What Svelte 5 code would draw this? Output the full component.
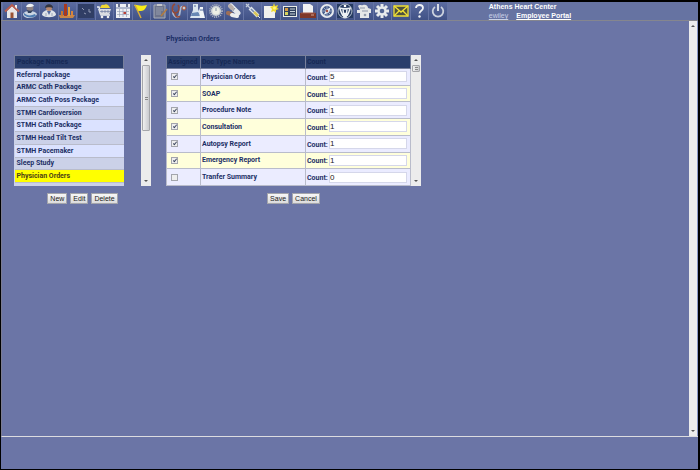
<script>
  let packages = [
    "Referral package",
    "ARMC Cath Package",
    "ARMC Cath Poss Package",
    "STMH Cardioversion",
    "STMH Cath Package",
    "STMH Head Tilt Test",
    "STMH Pacemaker",
    "Sleep Study",
    "Physician Orders",
  ];

  let docTypes = [
    { name: "Physician Orders", assigned: true, count: "5" },
    { name: "SOAP", assigned: true, count: "1" },
    { name: "Procedure Note", assigned: true, count: "1" },
    { name: "Consultation", assigned: true, count: "1" },
    { name: "Autopsy Report", assigned: true, count: "1" },
    { name: "Emergency Report", assigned: true, count: "1" },
    { name: "Tranfer Summary", assigned: false, count: "0" },
  ];

  let tools = [
    "home", "patient", "staff", "chart", "monitor", "cart", "calendar", "flag",
    "notes", "stethoscope", "lab", "seal", "pills", "syringe", "newdoc", "card",
    "printer", "compass", "medical", "scroll", "gear", "mail", "help", "power",
  ];

  let selected = "Physician Orders";
</script>

<div class="app">
  <header>
    <nav>
      {#each tools as tool}
        <button class="tool" aria-label={tool}>
          <svg viewBox="0 0 16 16">
            {#if tool === "home"}
              <path d="M3 8v7h10V8L8 3z" fill="#e8e6e6" />
              <path d="M1 8.5 8 2l7 6.5" fill="none" stroke="#b95c4c" stroke-width="2" />
              <path d="M11 2h2v4l-2-2z" fill="#f4efec" />
              <path d="M6.5 9.5h3V15h-3z" fill="#9c5434" />
            {:else if tool === "patient"}
              <path d="M1 11c1-2 3-3 6-3 4 0 7 1 8 3-1 3-5 4-8 4-4 0-6-2-6-4z" fill="#cbd5e2" />
              <path d="M2 10c3 3 7 3 11 1l1 2c-4 2-9 2-12-1z" fill="#4f7db2" />
              <circle cx="8" cy="5" r="3.4" fill="#8d8285" />
              <path d="M4 4c1-4 7-4 8-1L9 4z" fill="#edf0f3" />
              <path d="M5 7c2 1 4 1 6 0l-2 3H6z" fill="#344460" />
            {:else if tool === "staff"}
              <path d="M1 12c0-3 3-5 7-5s7 2 7 5c-3 3-11 3-14 0z" fill="#dfe3e8" />
              <circle cx="8" cy="5" r="3" fill="#b98a70" />
              <path d="M4 5c0-5 8-5 8 0-2-1-6-1-8 0z" fill="#33343f" />
              <path d="M6 8h4l-2 4z" fill="#566ca0" />
              <path d="M5 10v3m6-3v3" stroke="#9fa8b9" />
            {:else if tool === "chart"}
              <path d="M0 12h16l-2 3H1z" fill="#c58649" />
              <path d="M2 8h2v5H2z" fill="#c97831" />
              <path d="M5 1h3v12H5z" fill="#a9391e" />
              <path d="M9 4h2v9H9z" fill="#e6a33b" />
              <path d="M12 8h2v5h-2z" fill="#d9853c" />
            {:else if tool === "monitor"}
              <path d="M0 1h16v14H0z" fill="#303e65" />
              <path d="M4 5l2 2m0 3 2 1m3-5v3h2" fill="none" stroke="#929bb6" />
            {:else if tool === "cart"}
              <path d="M1 4h2l2 8h9" fill="none" stroke="#eceff3" stroke-width="1.4" />
              <path d="M2 6h13l-2 6H4z" fill="#dadde2" />
              <path d="M4 5c1-3 2-4 4-3 2-2 5 0 6 3z" fill="#f1d731" />
              <path d="M6 7v3m3-3v3m3-3v3M4 8.5h10" stroke="#62709a" stroke-width=".6" />
              <circle cx="6" cy="14" r="1.3" fill="#eee" /><circle cx="12" cy="14" r="1.3" fill="#eee" />
            {:else if tool === "calendar"}
              <path d="M1 1h14v14H1z" fill="#eef0f3" />
              <path d="M1 5h14" stroke="#7380a6" />
              <path d="M2 8.5h12M2 11.5h12M4.5 6v8M8 6v8M11.5 6v8" stroke="#8f98b2" stroke-width=".6" />
              <path d="M4 1v3m8-3v3" stroke="#313d65" stroke-width="1.4" />
              <path d="M8.5 9h2.5v2H8.5z" fill="#b94037" />
            {:else if tool === "flag"}
              <path d="M1 2c3-1 5 2 13 0-1 3-3 6-6 6L5 8z" fill="#f8ec17" />
              <path d="m2 2 6 13" stroke="#d8ad38" stroke-width="1.5" />
            {:else if tool === "notes"}
              <path d="M2 2h11v13H2z" fill="#6d748b" stroke="#a9adb8" />
              <path d="M5 1h5v2H5z" fill="#c4c6cc" />
              <path d="M4 5h7M4 7h7M4 9h5M4 11h5" stroke="#959bad" />
              <path d="m9 13 6-7" stroke="#b47c3e" stroke-width="1.4" />
            {:else if tool === "stethoscope"}
              <path d="M2 7c-1 6 4 9 6 6 2-4 0-11 5-9" fill="none" stroke="#a9b6ce" stroke-width="1.8" />
              <path d="M4 1C0 3 1 9 4 10c4 0 5-5 3-8M4 10c0 4 3 5 5 3" fill="none" stroke="#944a38" stroke-width="1.6" />
              <circle cx="13" cy="5" r="2" fill="#c7cbd3" stroke="#a44c32" />
            {:else if tool === "lab"}
              <path d="M4 1h5v5l4 9H1l3-8z" fill="#dce7ef" />
              <path d="m3 10 6-1 3 4H2z" fill="#6989b4" />
              <path d="M11 4h3v3l2 8h-5l-1-7z" fill="#f1f5f7" />
              <path d="M5 3h2m4 4h3" stroke="#526d9b" />
            {:else if tool === "seal"}
              <circle cx="8" cy="8" r="6" fill="none" stroke="#aeb4c0" stroke-width="2" stroke-dasharray="1 1" />
              <circle cx="8" cy="8" r="5" fill="#d0d6d9" />
              <circle cx="8" cy="8" r="3.5" fill="#edf0e6" />
              <path d="M8 5v3" stroke="#8291a3" />
            {:else if tool === "pills"}
              <path d="m5 3 7 7" stroke="#e6e8eb" stroke-width="5" stroke-linecap="round" />
              <path d="m4 3 2 2" stroke="#b9aea9" stroke-width="4" stroke-linecap="round" />
              <path d="m2 10 3 1" stroke="#9d6f57" stroke-width="4" stroke-linecap="round" />
              <path d="m6 12 5 1" stroke="#edeeee" stroke-width="4" stroke-linecap="round" />
              <path d="m9 5-3 4" stroke="#8a929f" />
            {:else if tool === "syringe"}
              <path d="m1 1 3 3M1 4l3-3m-1 2 9 9" stroke="#c2cbdb" stroke-width="1.2" />
              <path d="m5 5 8 8" stroke="#dfe6ec" stroke-width="4" />
              <path d="m6 6 3 3" stroke="#7489ad" stroke-width="1.5" />
              <path d="m9 9 4 4" stroke="#d9c658" stroke-width="2.5" />
              <path d="m13 13 2 2" stroke="#e8ecef" />
            {:else if tool === "newdoc"}
              <path d="M1 3h11v12H1z" fill="#f1f1ed" />
              <path d="m11 0 1 3 3-1-1 3 2 1-3 1v3l-2-2-3 1 1-3-2-2 3-1z" fill="#f0da2e" />
              <circle cx="11.5" cy="5" r="1.5" fill="#fff47b" />
            {:else if tool === "card"}
              <path d="M1 3h14v11H1z" fill="#e9ece9" />
              <path d="M2 4h12v9H2z" fill="#30415f" />
              <path d="M3 5h3v3H3z" fill="#d99c42" />
              <path d="M3 9h3v3H3z" fill="#d8d35e" />
              <path d="M8 6h5M8 8.5h5M8 11h5" stroke="#cbd5da" />
            {:else if tool === "printer"}
              <path d="M3 1h7l3 2v7H3z" fill="#f1f2f4" />
              <path d="M0 10h16v5H0z" fill="#803728" />
              <path d="M1 10h14" stroke="#a65c4a" />
              <path d="M11 12h3" stroke="#d5a590" />
            {:else if tool === "compass"}
              <circle cx="8" cy="8" r="6" fill="#465d8c" stroke="#e8ecef" stroke-width="2" />
              <path d="M8 2v12M2 8h12M4 4l8 8m0-8-8 8" stroke="#b2bfd3" stroke-width=".8" />
              <path d="m5 12 2-5 5-3-2 5z" fill="#e7edf1" />
              <circle cx="8" cy="8" r="1.2" fill="#a34e42" />
            {:else if tool === "medical"}
              <path d="M0 1h16v14H0z" fill="#263b61" />
              <circle cx="8" cy="8" r="7" fill="none" stroke="#b5c0ce" />
              <circle cx="8" cy="3" r="1.3" fill="#fff" />
              <path d="M2 5c4 1 8 1 12 0M6 6h4l-1 9-1-5-1 5zM3 6c1 3 2 5 3 7m7-7c-1 3-2 5-3 7" fill="none" stroke="#edf2f5" stroke-width="1.5" />
            {:else if tool === "scroll"}
              <path d="M2 3c2-2 3 0 5-1 3-1 5 1 5 3l3 1v4h-2v5H4v-5H1V7h3z" fill="#e5e7e9" />
              <path d="M4 5h5m-3 3h6" stroke="#8d96a9" />
              <circle cx="9" cy="12" r="1.3" fill="#929bab" />
            {:else if tool === "gear"}
              <path d="M8 1v14M1 8h14M3 3l10 10m0-10L3 13" stroke="#e7eaec" stroke-width="3" />
              <circle cx="8" cy="8" r="4.5" fill="#e7eaec" />
              <circle cx="8" cy="8" r="2.3" fill="#516493" />
            {:else if tool === "mail"}
              <path d="M1 3h14v10H1z" fill="#4e513e" stroke="#f0df35" stroke-width="1.3" />
              <path d="m1 3 7 6 7-6M1 13l5-5m9 5-5-5" fill="none" stroke="#f0df35" stroke-width="1.4" />
            {:else if tool === "help"}
              <path d="M5 5c0-4 7-4 7 0 0 3-3.5 2.5-3.5 5.5" fill="none" stroke="#f0f2f5" stroke-width="1.8" />
              <circle cx="8.5" cy="13.5" r="1.2" fill="#f0f2f5" />
            {:else}
              <path d="M5 4a5.3 5.3 0 1 0 6 0" fill="none" stroke="#cbd2de" stroke-width="1.8" />
              <path d="M8 1v7" stroke="#e6e9ee" stroke-width="1.8" />
            {/if}
          </svg>
        </button>
      {/each}
    </nav>
    <div class="account">
      <div>Athens Heart Center</div>
      <div class="links">
        <a class="user" href="#user">ewiley</a>
        <a href="#portal">Employee Portal</a>
      </div>
    </div>
  </header>

  <main>
    <div class="content">
      <section class="packages">
        <div class="panel">
          <div class="listbox">
            <table class="list">
              <thead>
                <tr><th>Package Names</th></tr>
              </thead>
              <tbody>
                {#each packages as pkg}
                  <tr class:selected={pkg === selected}><td>{pkg}</td></tr>
                {/each}
              </tbody>
            </table>
          </div>
          <div class="scrollbar">
            <i class="up"></i>
            <div class="thumb tall"></div>
            <i class="down"></i>
          </div>
        </div>
        <div class="buttons">
          <button>New</button>
          <button>Edit</button>
          <button>Delete</button>
        </div>
      </section>

      <section class="orders">
        <h2>Physician Orders</h2>
        <div class="panel">
          <table class="docs">
            <thead>
              <tr>
                <th class="assigned">Assigned</th>
                <th class="name">Doc Type Names</th>
                <th>Count</th>
              </tr>
            </thead>
            <tbody>
              {#each docTypes as doc, i}
                <tr>
                  <td><input type="checkbox" aria-label={doc.name} checked={doc.assigned} /></td>
                  <td>{doc.name}</td>
                  <td>
                    <div class="count">
                      <label for="count{i}">Count:</label>
                      <input type="text" id="count{i}" value={doc.count} />
                    </div>
                  </td>
                </tr>
              {/each}
            </tbody>
          </table>
          <div class="scrollbar">
            <i class="up"></i>
            <div class="thumb"></div>
            <i class="down"></i>
          </div>
        </div>
        <div class="buttons">
          <button>Save</button>
          <button>Cancel</button>
        </div>
      </section>
    </div>
    <div class="scrollbar page">
      <i class="up"></i>
      <i class="down"></i>
    </div>
  </main>
  <footer></footer>
</div>

<style>
  :global(body) {
    background: #6b75a6;
  }

  .app {
    box-sizing: border-box;
    min-height: 100vh;
    display: flex;
    flex-direction: column;
    border: 1px solid #000;
    border-width: 2px 2px 1px 1px;
    background: #6b75a6;
    font-family: "Liberation Sans", Arial, sans-serif;
    font-size: 7px;
    color: #1c2f66;
  }

  header {
    display: flex;
    height: 18px;
    padding-left: 2px;
    border-bottom: 1px solid #85868e;
    background: #6673a2;
  }

  nav {
    display: grid;
    grid-template-columns: repeat(24, 1fr);
    width: 64%;
  }

  .tool {
    display: flex;
    align-items: center;
    justify-content: center;
    padding: 0;
    border: 0;
    border-right: 1px solid #6574a5;
    background: linear-gradient(#5c6ca0, #405186);
  }

  .tool svg {
    width: 16px;
    height: 16px;
  }

  .account {
    margin-left: 41px;
    color: #fff;
    font-weight: bold;
    line-height: 9px;
  }

  .links {
    display: flex;
    gap: 8px;
  }

  .links a {
    color: #fff;
  }

  .links .user {
    color: #c9d0e6;
    font-weight: normal;
  }

  main {
    flex: 1;
    display: flex;
    border-left: 1px solid #7b7c92;
    border-bottom: 1px solid #dcdce0;
  }

  .content {
    flex: 1;
    display: flex;
    align-items: flex-end;
    align-self: flex-start;
    gap: 15px;
    padding: 14px 12px;
    font-family: Roboto, "Liberation Sans", sans-serif;
  }

  footer {
    height: 32px;
  }

  h2 {
    margin: 0 0 12px;
    font-size: 7px;
    line-height: 8px;
  }

  .panel {
    display: flex;
    height: 131px;
  }

  table {
    border-collapse: collapse;
    table-layout: fixed;
    font-weight: bold;
    line-height: 8px;
  }

  .listbox {
    width: 110px;
    margin-right: 17px;
    background: #cbd1e8;
  }

  .list {
    width: 100%;
    height: 128px;
  }

  .docs {
    width: 245px;
    height: 131px;
  }

  th,
  td {
    padding: 0 2px;
    border: 1px solid #b9bccb;
    text-align: left;
  }

  .docs th,
  .docs td {
    padding: 0 1px;
  }

  th {
    height: 12px;
    background: #2a3e6c;
    color: #172955;
    border-color: #78809c;
  }

  .list td {
    border-width: 0 0 1px;
    background: #cbd1e8;
  }

  .list tr:nth-child(odd) td {
    background: #dbe2ff;
  }

  .list tr.selected td {
    background: #ff0;
    color: #4d3f15;
  }

  .docs tr:nth-child(odd) td {
    background: #ebecff;
  }

  .docs tr:nth-child(even) td {
    background: #ffffdb;
  }

  .docs th.assigned {
    width: 31px;
  }

  .docs th.name {
    width: 102px;
  }

  .count {
    display: flex;
    align-items: center;
  }

  .count label {
    width: 22px;
    padding-top: 2px;
  }

  .count input {
    box-sizing: border-box;
    flex: 1;
    min-width: 0;
    height: 11px;
    margin: 0 2px 0 0;
    padding: 0;
    border: 1px solid #d5d7ea;
    background: #fff;
    font: 8px "Liberation Sans", Arial, sans-serif;
    color: #222;
  }

  input[type="checkbox"] {
    appearance: none;
    display: flex;
    justify-content: center;
    box-sizing: border-box;
    width: 7px;
    height: 7px;
    margin: 0 0 0 3px;
    border: 1px solid #a3a5ac;
    background: #eee;
  }

  input[type="checkbox"]:checked::after {
    content: "";
    width: 1px;
    height: 3px;
    border: solid #3e4861;
    border-width: 0 1px 1px 0;
    transform: rotate(40deg);
  }

  .scrollbar {
    display: flex;
    flex-direction: column;
    align-items: center;
    width: 10px;
    background: #ececec;
  }

  .scrollbar i {
    width: 0;
    margin: 4px 0;
    border: 2px solid transparent;
  }

  .scrollbar .up {
    border-top: 0;
    border-bottom-color: #555;
  }

  .scrollbar .down {
    margin-top: auto;
    border-bottom: 0;
    border-top-color: #555;
  }

  .thumb {
    box-sizing: border-box;
    display: flex;
    align-items: center;
    justify-content: center;
    width: 8px;
    height: 7px;
    border: 1px solid #a5a6aa;
    border-radius: 1px;
    background: linear-gradient(90deg, #f0f0f0, #c9cacf);
  }

  .thumb::after {
    content: "";
    width: 3px;
    height: 3px;
    background: repeating-linear-gradient(#888 0 1px, #ddd 1px 2px);
  }

  .thumb.tall {
    height: 66px;
  }

  .page {
    width: 8px;
    border-right: 1px solid #8a98c8;
  }

  .buttons {
    display: flex;
    justify-content: center;
    gap: 3px;
    margin-top: 7px;
  }

  .buttons button {
    padding: 0 2px;
    border: 1px solid #a4a5ab;
    background: linear-gradient(#f7f7f7, #dcdcdc);
    font: 7px/9px "Liberation Sans", Arial, sans-serif;
    color: #222;
  }
</style>
